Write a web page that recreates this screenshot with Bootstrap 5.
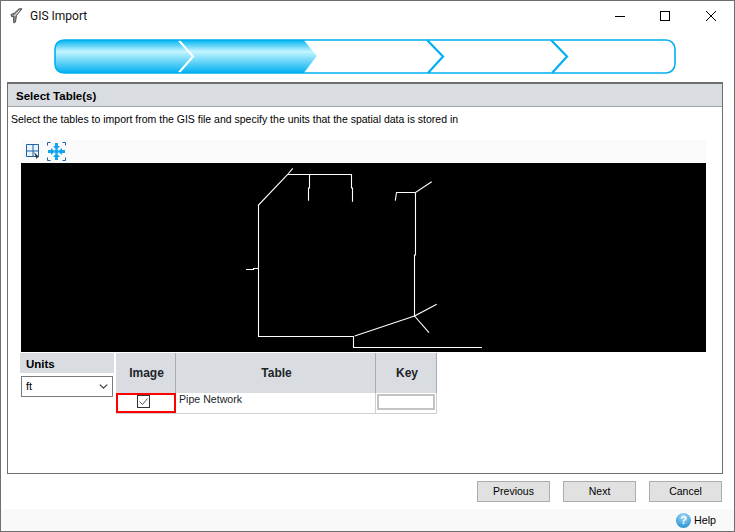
<!DOCTYPE html>
<html lang="en">
<head>
<meta charset="utf-8">
<title>GIS Import</title>
<link href="https://cdn.jsdelivr.net/npm/bootstrap@5.3.0/dist/css/bootstrap.min.css" rel="stylesheet">
<style>
html,body{height:100%;margin:0;background:#fff;overflow:hidden}
body{font-family:"Liberation Sans",Arial,sans-serif;font-size:10.5px;color:#000}
.gis-window{width:735px;height:532px;border:1px solid #6f6f6f;background:#fff}
.gis-title{height:30px;margin-bottom:2px;padding:0 1px 0 9px}
.gis-title-text{font-family:Roboto,"Noto Sans",sans-serif;font-size:12px;margin-left:7px;color:#111}
.gis-ctrl{width:45px;height:30px;display:flex;align-items:center;justify-content:center}
.gis-ctrl-mid{margin-right:1px}
.gis-steps{display:block;margin:5px 0 0 52px;width:624px;height:36px}
.gis-panel{margin:8px 11px 0 6px;height:392px;border:1px solid #6f6f6f;border-top-width:2px;border-radius:0;background:#fff}
.gis-panel-head{height:23px;padding:1px 0 0 8px;background:#d9dde1;border-bottom:1px solid #a0a3a6;font-weight:700;font-size:11.5px;line-height:22px;border-radius:0!important}
.gis-hint{padding:6px 0 0 3px;line-height:13px;height:33px}
.gis-tools{margin:0 0 0 13px;width:685px;height:23px;background:#fafafa;padding-left:4px;gap:6px}
.gis-map{display:block;margin-left:13px;width:685px;height:189px;background:#000}
.gis-lower{margin:1px 0 0 12px;align-items:flex-start}
.gis-units{width:94px;margin-right:1px}
.gis-units-head{height:20px;background:#d9dde1;font-weight:700;font-size:11.5px;line-height:22px;padding-left:6px}
.gis-select{display:block;width:92px;height:21px;margin:3px 0 0 1px;padding:0 0 0 4px;font-size:11px;line-height:19px;border:1px solid #7a7a7a;border-radius:0;color:#000;font-family:inherit;background-size:11px 9px;background-position:right 3px center}
.gis-table{width:321px;margin:0;table-layout:fixed;border-collapse:collapse;font-size:10.6px}
.gis-table th{height:40px;padding:0 0 0 2px;background:#d9dde1;text-align:center;vertical-align:middle;font-size:12px;font-weight:700;border:0;border-left:1px solid #fff;border-right:1px solid #a9adb0;box-shadow:none}
.gis-table td{height:20px;padding:0;border:0;border-bottom:1px solid #d0d0d0;border-right:1px solid #d0d0d0;vertical-align:top;background:#fff;box-shadow:none}
.gis-cell-check{outline:2px solid #f00;outline-offset:-2px;text-align:left;padding:2px 0 0 21px!important}
.gis-cell-check svg{display:block}
.gis-cell-name{padding-left:3px!important;line-height:13px}
.gis-key{display:block;width:58px;height:16px;margin:1px 0 0 1px;border:2px solid #c4c4c4;background:#fff}
.gis-actions{padding:7px 12px 0 0;gap:13px;justify-content:flex-end}
.gis-btn{width:73px;height:21px;padding:0;font-size:10.5px;line-height:19px;font-family:"Liberation Sans",Arial,sans-serif;color:#000;background:#e1e1e1;border:1px solid #adadad;border-radius:0}
.gis-foot{margin-top:7px;height:22px;background:#f9f9f9;padding-right:18px;justify-content:flex-end;align-items:center;font-size:10.7px;gap:3px}
.gis-help{width:15px;height:15px;border-radius:50%;background:radial-gradient(circle at 50% 25%,#a8dcf7,#3a9ddb 70%,#2b86c5);color:#fff;font-size:11px;font-weight:700;line-height:15px;text-align:center}
</style>
</head>
<body>
<div class="gis-window d-flex flex-column">
  <div class="gis-title d-flex align-items-center">
    <svg width="13" height="16" viewBox="0 0 13 16"><path d="M1 6.500 4.500 5 9 .8 12 .8 6.500 7.500 5.500 14 3.800 15 3.300 8.500 1.500 8.500Z" fill="#8b8f92" stroke="#333" stroke-width=".8"/><path d="M4.500 8 9.500 2.500" stroke="#fff" stroke-width="1"/></svg>
    <span class="gis-title-text flex-grow-1">GIS Import</span>
    <div class="gis-ctrl"><svg width="12" height="12" viewBox="0 0 12 12"><path d="M1 6.500H11" stroke="#000" fill="none"/></svg></div>
    <div class="gis-ctrl gis-ctrl-mid"><svg width="12" height="12" viewBox="0 0 12 12"><rect x="1.500" y="1.500" width="9" height="9" stroke="#000" fill="none"/></svg></div>
    <div class="gis-ctrl"><svg width="12" height="12" viewBox="0 0 12 12"><path d="M1 1 11 11M11 1 1 11" stroke="#000" fill="none"/></svg></div>
  </div>
  <svg class="gis-steps" viewBox="53 38 624 36">
    <defs>
      <linearGradient id="stepfill" x1="0" y1="0" x2="0" y2="1">
        <stop offset="0" stop-color="#00b3f0"/>
        <stop offset=".35" stop-color="#c4f5ff"/>
        <stop offset="1" stop-color="#00b0f0"/>
      </linearGradient>
    </defs>
    <path d="M63 40H304L317 56 304 73H63Q55 73 55 65V48Q55 40 63 40Z" fill="url(#stepfill)"/>
    <path d="M179 40.500 193 56.500 179 72.500" fill="none" stroke="#fff" stroke-width="2"/>
    <path d="M304 40 317 56 304 73" fill="none" stroke="#fff" stroke-width=".5"/>
    <path d="M427 40 443 56.500 428 73M551 40 567 56.500 552 73" fill="none" stroke="#00b0f0" stroke-width="2.200"/>
    <rect x="55" y="40" width="620" height="33" rx="9" fill="none" stroke="#00b0f0" stroke-width="1.600"/>
  </svg>
  <div class="card gis-panel">
    <div class="card-header gis-panel-head">Select Table(s)</div>
    <div class="gis-hint">Select the tables to import from the GIS file and specify the units that the spatial data is stored in</div>
    <div class="gis-tools d-flex align-items-center">
      <svg width="16" height="17" viewBox="0 0 16 17"><path d="M1.500 1.500H13.500V13.500H1.500ZM1.500 8H13.500M8 1.500V13.500" fill="#eaf3fb" stroke="#1c62a5" stroke-width="1"/><path d="M9 9 14 14 12.500 14.500 11.500 16Z" fill="#333"/></svg>
      <svg width="19" height="19" viewBox="0 0 19 19"><path d="M.5 3.500V.5H3.500M15.500 .5H18.500V3.500M.5 15.500V18.500H3.500M15.500 18.500H18.500V15.500" fill="none" stroke="#1c62a5"/><path d="M8 1H11V4H13L9.500 8 6 4H8ZM8 18H11V15H13L9.500 11 6 15H8ZM1 8H4V6L8 9.500 4 13V11H1ZM18 8H15V6L11 9.500 15 13V11H18Z" fill="#12a5ee"/><rect x="7.500" y="7.500" width="4" height="4" fill="#12a5ee"/></svg>
    </div>
    <svg class="gis-map" viewBox="21 163 685 189">
      <g fill="none" stroke="#fff" stroke-width="1.100">
        <path d="M292.700 168.300 287.700 174.500 258.500 205V336.500H353.500V347.500H482"/>
        <path d="M287.700 174.500H351.500V188H352.500V201.700"/>
        <path d="M309.500 174.500V188H308.500V200.700"/>
        <path d="M395.300 200.700 396.500 192.500H415.500L431.700 181.700"/>
        <path d="M415.500 192.500V255H414.500V316L436.700 304.300"/>
        <path d="M414.500 316 354.700 336"/>
        <path d="M414.500 316 429 332.700"/>
        <path d="M246 269.500H253.500V268.500H258.500"/>
      </g>
    </svg>
    <div class="gis-lower d-flex">
      <div class="gis-units">
        <div class="gis-units-head">Units</div>
        <select class="form-select gis-select" aria-label="Units"><option>ft</option></select>
      </div>
      <table class="table gis-table">
        <colgroup><col style="width:60px"><col style="width:200px"><col style="width:61px"></colgroup>
        <thead><tr><th>Image</th><th>Table</th><th>Key</th></tr></thead>
        <tbody><tr>
          <td class="gis-cell-check"><svg width="13" height="13" viewBox="0 0 13 13"><rect x=".5" y=".5" width="12" height="12" fill="#fff" stroke="#333"/><path d="M2.500 6.500 5.500 9.500 10.500 3.500" fill="none" stroke="#555" stroke-width="1"/></svg></td>
          <td class="gis-cell-name">Pipe Network</td>
          <td><span class="gis-key"></span></td>
        </tr></tbody>
      </table>
    </div>
  </div>
  <div class="gis-actions d-flex">
    <button type="button" class="btn gis-btn">Previous</button>
    <button type="button" class="btn gis-btn">Next</button>
    <button type="button" class="btn gis-btn">Cancel</button>
  </div>
  <div class="gis-foot d-flex">
    <span class="gis-help">?</span><span>Help</span>
  </div>
</div>
</body>
</html>
